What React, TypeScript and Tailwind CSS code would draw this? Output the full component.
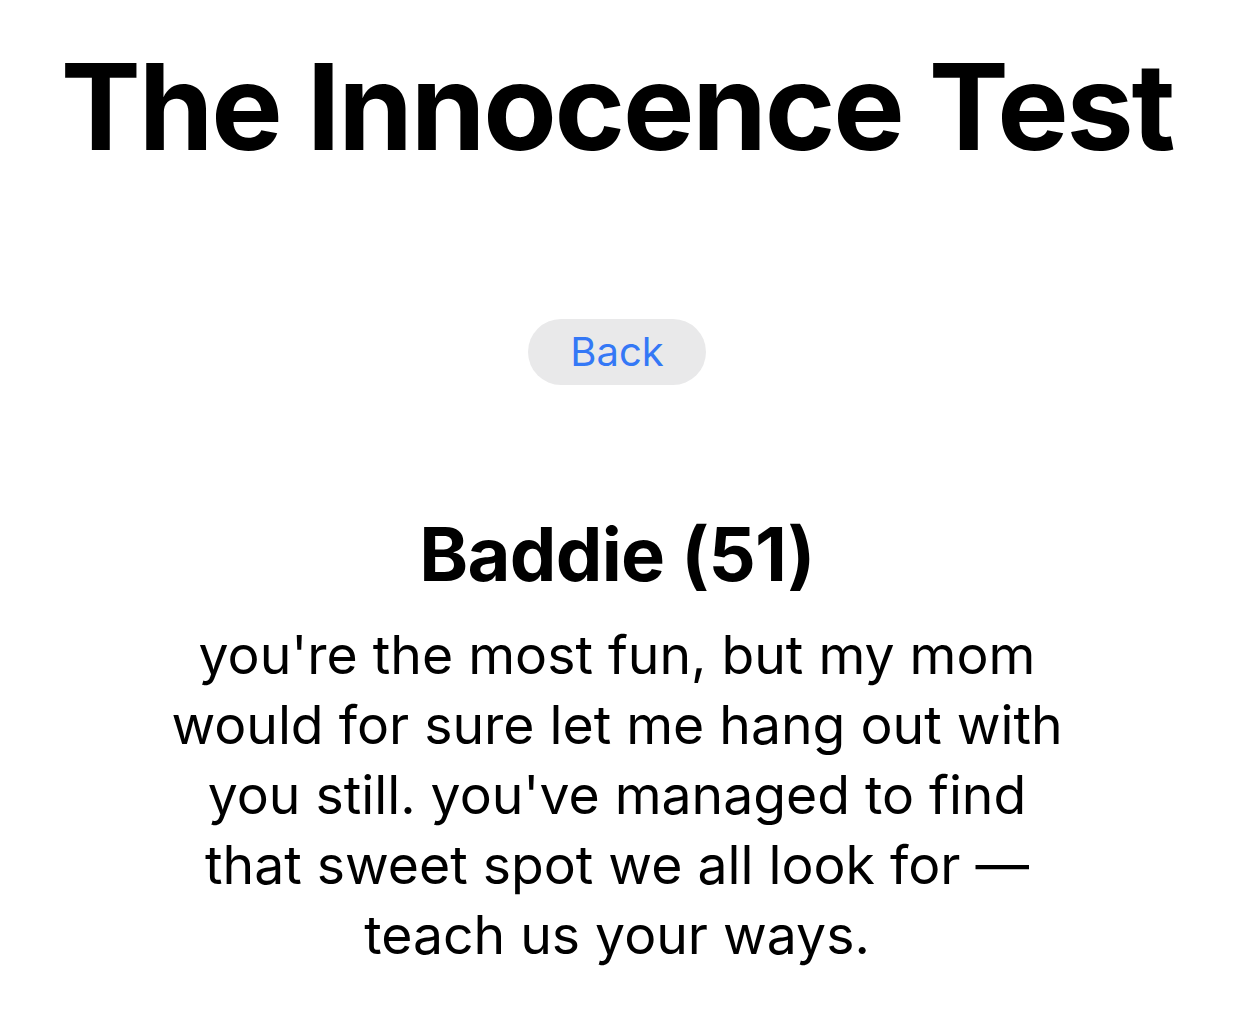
import React from "react";

export default function App() {
  return (
    <div
      className="min-h-screen w-full bg-white text-black flex flex-col items-center pt-[47px] pr-2"
      style={{ fontFamily: "Inter, 'Noto Sans', sans-serif" }}
    >
      <h1 className="text-[120px] leading-none font-bold tracking-[-2.2px] whitespace-nowrap">
        The Innocence Test
      </h1>
      <button className="mt-[152px] w-[178px] h-[66px] rounded-full bg-[#e9e9ea] text-[#3478f6] text-[40px] leading-none flex items-center justify-center">
        Back
      </button>
      <h2 className="mt-[132px] text-[74px] leading-none font-bold tracking-[-0.7px] whitespace-nowrap">
        Baddie (51)
      </h2>
      <p className="mt-[29px] text-[53.5px] leading-[70px] text-center">
        you're the most fun, but my mom
        <br />
        would for sure let me hang out with
        <br />
        you still. you've managed to find
        <br />
        that sweet spot we all look for —
        <br />
        teach us your ways.
      </p>
    </div>
  );
}
